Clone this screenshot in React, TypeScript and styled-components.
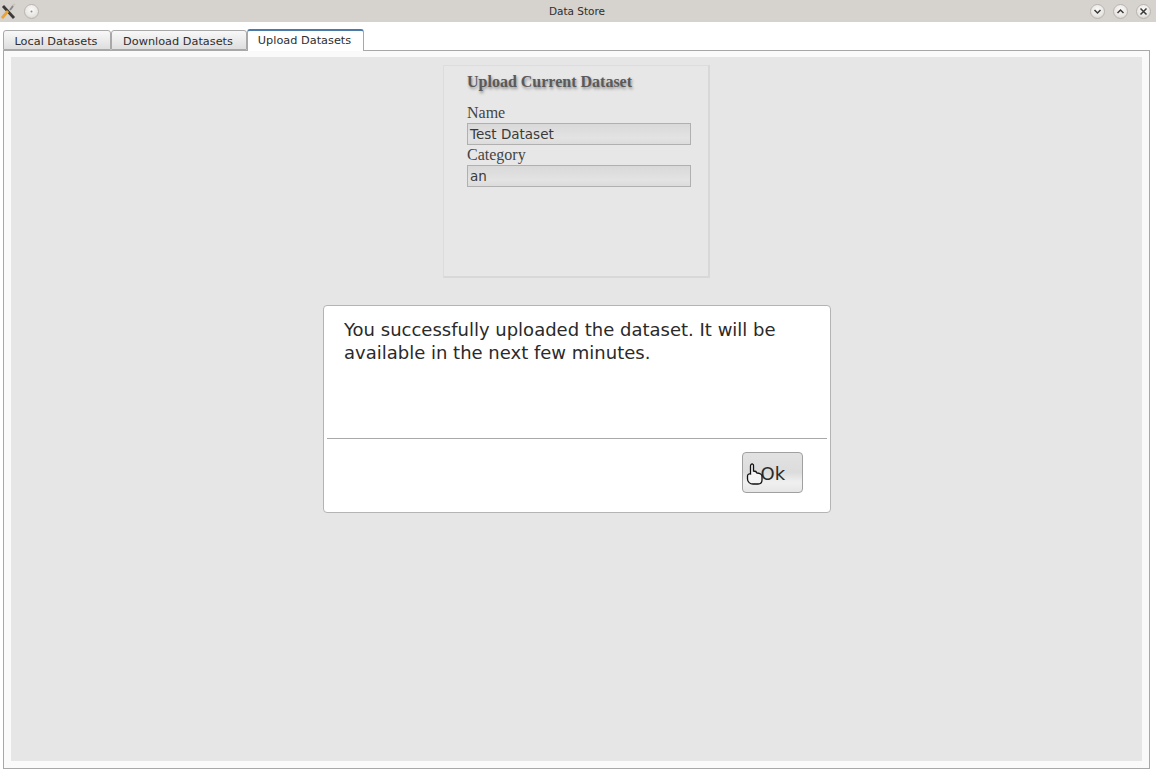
import React from 'react'
import styled, { createGlobalStyle } from 'styled-components'

const GlobalStyle = createGlobalStyle`
  html, body {
    margin: 0;
    padding: 0;
    background: #ffffff;
  }
  body {
    width: 1156px;
    height: 773px;
    overflow: hidden;
    font-family: "DejaVu Sans", sans-serif;
  }
`

const Window = styled.div`
  display: flex;
  flex-direction: column;
  width: 1156px;
  height: 773px;
  background: #ffffff;
`

const TitleBar = styled.div`
  position: relative;
  display: flex;
  flex: 0 0 22px;
  align-items: center;
  justify-content: space-between;
  padding: 0 5px 0 1px;
  background: #d6d2ce;
`

const TitleText = styled.div`
  position: absolute;
  left: 0;
  right: 2px;
  text-align: center;
  font-size: 10.5px;
  color: #2e2e2e;
`

const ButtonGroup = styled.div<{ $gap: number }>`
  display: flex;
  align-items: center;
  gap: ${(p) => p.$gap}px;
`

const WinButton = styled.div`
  display: flex;
  align-items: center;
  justify-content: center;
  width: 15px;
  height: 15px;
  border-radius: 50%;
  border: 1px solid #b9b5b1;
  box-sizing: border-box;
  background: radial-gradient(circle at 50% 35%, #fbfaf9 0%, #e9e6e3 60%, #c9c5c1 100%);
`

const TabBar = styled.div`
  display: flex;
  align-items: flex-end;
  flex: 0 0 28px;
  padding-left: 3px;
  position: relative;
  z-index: 1;
`

const Tab = styled.div<{ $active?: boolean; $width: number }>`
  box-sizing: border-box;
  width: ${(p) => p.$width}px;
  height: ${(p) => (p.$active ? 22 : 20)}px;
  margin-bottom: ${(p) => (p.$active ? -1 : 0)}px;
  padding: ${(p) => (p.$active ? 2 : 3)}px 2px 0 0;
  text-align: center;
  font-size: 11.3px;
  line-height: 15px;
  color: #2e2e2e;
  border: 1px solid #a8a8a8;
  border-bottom: ${(p) => (p.$active ? 'none' : '1px solid #a8a8a8')};
  border-top: ${(p) => (p.$active ? '2px solid #4a7aa8' : '1px solid #a8a8a8')};
  border-radius: 3px 3px 0 0;
  background: ${(p) => (p.$active ? '#ffffff' : 'linear-gradient(#f8f8f8, #dedede)')};
  & + & {
    border-left: ${(p) => (p.$active ? '1px solid #a8a8a8' : 'none')};
  }
`

const Pane = styled.div`
  box-sizing: border-box;
  flex: 0 0 719px;
  margin-left: 3px;
  width: 1147px;
  padding: 6px 7px 7px 7px;
  border: 1px solid #a8a8a8;
  background: #fafafa;
`

const Stage = styled.div`
  position: relative;
  display: flex;
  flex-direction: column;
  align-items: center;
  height: 100%;
  padding-top: 8px;
  box-sizing: border-box;
  background: #e6e6e6;
`

const FormPanel = styled.div`
  box-sizing: border-box;
  width: 267px;
  height: 213px;
  padding: 6px 18px 0 23px;
  background: #e7e7e7;
  border: 1px solid #dcdcdc;
  border-right: 2px solid #d8d8d8;
  border-bottom: 2px solid #d8d8d8;
`

const FormTitle = styled.div`
  font-family: "Liberation Serif", serif;
  font-weight: bold;
  font-size: 16px;
  line-height: 19px;
  color: #5a5a5a;
  text-shadow: 1px 2px 3px rgba(0, 0, 0, 0.4);
  margin-bottom: 13px;
`

const FieldLabel = styled.div`
  font-family: "Liberation Serif", serif;
  font-size: 16px;
  line-height: 17px;
  height: 19px;
  color: #444444;
`

const FieldBox = styled.div`
  box-sizing: border-box;
  width: 224px;
  height: 22px;
  padding-left: 2px;
  margin-bottom: 1px;
  font-size: 13.5px;
  line-height: 20px;
  color: #3a3a3a;
  border: 1px solid #b0b0b0;
  background: linear-gradient(#d9d9d9, #e3e3e3 70%, #dcdcdc);
`

const Dialog = styled.div`
  position: absolute;
  left: 312px;
  top: 248px;
  box-sizing: border-box;
  width: 508px;
  height: 208px;
  padding: 12px 3px 0;
  background: #ffffff;
  border: 1px solid #b4b4b4;
  border-radius: 4px;
`

const Message = styled.div`
  box-sizing: border-box;
  height: 120px;
  padding: 0 17px;
  font-size: 18px;
  line-height: 23px;
  color: #2a2a2a;
`

const DialogFooter = styled.div`
  display: flex;
  justify-content: flex-end;
  padding: 13px 24px 0 0;
  border-top: 1px solid #a8a8a8;
`

const OkButton = styled.div`
  position: relative;
  box-sizing: border-box;
  width: 61px;
  height: 41px;
  padding-left: 17.5px;
  font-size: 18px;
  line-height: 41px;
  color: #2a2a2a;
  border: 1px solid #a0a0a0;
  border-radius: 4px;
  background: linear-gradient(#e2e2e2, #dcdcdc 50%, #f0f0f0 75%, #e6e6e6);
`

const HandCursor = styled.svg`
  position: absolute;
  left: 3px;
  top: 10px;
`

const Logo = () => (
  <svg width="16" height="17" viewBox="0 0 16 17">
    <path d="M11 3 L14 1" stroke="#c9c4b8" strokeWidth="1.8" />
    <path d="M9 7 L12 3" stroke="#8a8a8a" strokeWidth="2" />
    <path d="M2 3 L13 15" stroke="#3a3a3a" strokeWidth="2.8" />
    <path d="M1 15 L7 8" stroke="#e8a33a" strokeWidth="2.8" />
  </svg>
)

const Glyph = ({ d }: { d: string }) => (
  <svg width="9" height="9" viewBox="0 0 9 9">
    <path d={d} fill="none" stroke="#3a3a3a" strokeWidth="1.5" />
  </svg>
)

export default function App() {
  return (
    <Window>
      <GlobalStyle />
      <TitleBar>
        <ButtonGroup $gap={7}>
          <Logo />
          <WinButton>
            <svg width="3" height="3" viewBox="0 0 3 3">
              <circle cx="1.5" cy="1.5" r="1" fill="#8a8a8a" />
            </svg>
          </WinButton>
        </ButtonGroup>
        <TitleText>Data Store</TitleText>
        <ButtonGroup $gap={8}>
          <WinButton><Glyph d="M1.5 3 L4.5 6 L7.5 3" /></WinButton>
          <WinButton><Glyph d="M1.5 6 L4.5 3 L7.5 6" /></WinButton>
          <WinButton><Glyph d="M1.5 1.5 L7.5 7.5 M7.5 1.5 L1.5 7.5" /></WinButton>
        </ButtonGroup>
      </TitleBar>
      <TabBar>
        <Tab $width={108}>Local Datasets</Tab>
        <Tab $width={136}>Download Datasets</Tab>
        <Tab $active $width={117}>Upload Datasets</Tab>
      </TabBar>
      <Pane>
        <Stage>
          <FormPanel>
            <FormTitle>Upload Current Dataset</FormTitle>
            <FieldLabel>Name</FieldLabel>
            <FieldBox>Test Dataset</FieldBox>
            <FieldLabel>Category</FieldLabel>
            <FieldBox>an</FieldBox>
          </FormPanel>
          <Dialog>
            <Message>You successfully uploaded the dataset. It will be available in the next few minutes.</Message>
            <DialogFooter>
              <OkButton>
                Ok
                <HandCursor width="19" height="22" viewBox="0 0 19 22">
                  <path
                    d="M5 1.5 C6 0.5 7.5 1 7.5 2.5 L7.5 8 C9 8 10.5 8.5 11 10 C13 10 16 11 16 13.5 L16 17 C16 19.5 14.5 21 12 21 L7 21 C4 21 1.5 19 1.5 16 L1.5 13 C1.5 11.5 3 10.5 4.5 11 L4.5 3 C4.5 2.5 4.7 2 5 1.5 Z"
                    fill="#f4f4f4"
                    stroke="#111111"
                    strokeWidth="1.3"
                  />
                </HandCursor>
              </OkButton>
            </DialogFooter>
          </Dialog>
        </Stage>
      </Pane>
    </Window>
  )
}
